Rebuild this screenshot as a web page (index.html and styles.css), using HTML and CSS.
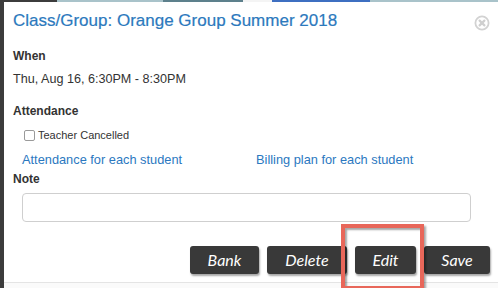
FILE: index.html
```html
<!DOCTYPE html>
<html lang="en">
<head>
  <meta charset="UTF-8">
  <meta name="viewport" content="width=device-width, initial-scale=1.0">
  <title>Class/Group details</title>
  <link rel="stylesheet" href="styles.css">
</head>
<body>

<div class="backdrop-strip">
  <span class="seg seg-dark"></span>
  <span class="seg seg-light"></span>
  <span class="seg seg-teal"></span>
  <span class="seg seg-white"></span>
  <span class="seg seg-blue"></span>
  <span class="seg seg-light2"></span>
</div>

<div class="modal">
  <div class="modal-header">
    <h1>Class/Group: Orange Group Summer 2018</h1>
    <button class="close" aria-label="Close">
      <svg width="16" height="16" viewBox="0 0 16 16">
        <circle cx="8" cy="8" r="6.6" fill="none" stroke="#d2d2d2" stroke-width="1.8"/>
        <path d="M5.6 5.6 L10.4 10.4 M10.4 5.6 L5.6 10.4" stroke="#cfcfcf" stroke-width="2.2" stroke-linecap="round"/>
      </svg>
    </button>
  </div>

  <div class="modal-body">
    <div class="label label-when">When</div>
    <div class="value">Thu, Aug 16, 6:30PM - 8:30PM</div>

    <div class="label label-attendance">Attendance</div>
    <label class="check-row">
      <input type="checkbox" class="check">
      <span>Teacher Cancelled</span>
    </label>
    <div class="link-row">
      <a href="#" class="link-attendance">Attendance for each student</a>
      <a href="#">Billing plan for each student</a>
    </div>

    <div class="label">Note</div>
    <input type="text" class="note-input">

    <div class="actions">
      <button class="btn btn-bank">Bank</button>
      <button class="btn btn-delete">Delete</button>
      <button class="btn btn-edit">Edit</button>
      <button class="btn btn-save">Save</button>
    </div>
  </div>

  <!-- screenshot annotation around the Edit button -->
  <div class="highlight"></div>
</div>

<div class="page-below"></div>

</body>
</html>
```

FILE: styles.css
```css
* {
  box-sizing: border-box;
}

body {
  margin: 0;
  padding: 0;
  height: 288px;
  overflow: hidden;
  font-family: 'Liberation Sans', Arial, sans-serif;
  background-color: #3c3c3c;
  color: #333;
}

.backdrop-strip {
  display: flex;
  height: 2px;
}

.seg { display: block; height: 2px; }
.seg-dark { width: 57px; background: #3c3c3c; }
.seg-light { width: 106px; background: #a9c3ca; }
.seg-teal { width: 80px; background: #5d808c; }
.seg-white { width: 29px; background: #f4f4f4; }
.seg-blue { width: 98px; background: #3e6fc1; }
.seg-light2 { flex: 1; background: #a9c3ca; }

.modal {
  position: relative;
  margin-left: 4px;
  height: 281px;
  background-color: #fff;
  border-bottom: 1px solid #e4e4e4;
}

.modal-header {
  display: flex;
  justify-content: space-between;
  align-items: flex-start;
  padding: 9px 8px 0 9px;
}

h1 {
  margin: 0;
  font-size: 17px;
  line-height: 20px;
  font-weight: normal;
  color: #2c79bd;
  -webkit-text-stroke: 0.2px #2c79bd;
}

.close {
  border: none;
  background: none;
  padding: 0;
  margin-top: 4px;
  width: 16px;
  height: 16px;
  cursor: pointer;
}

.close svg {
  display: block;
}

.modal-body {
  padding: 0 0 0 9px;
}

.label {
  font-size: 12px;
  line-height: 16px;
  font-weight: bold;
  color: #333;
}

.label-when {
  margin-top: 17px;
}

.value {
  margin-top: 7px;
  font-size: 12.6px;
  line-height: 16px;
}

.label-attendance {
  margin-top: 16px;
}

.check-row {
  display: flex;
  align-items: center;
  gap: 3px;
  margin: 8px 0 0 11px;
  font-size: 11px;
  line-height: 16px;
}

.check {
  appearance: none;
  margin: 0;
  width: 11px;
  height: 11px;
  border: 1px solid #9a9a9a;
  border-radius: 2px;
  background: #fff;
}

.link-row {
  display: flex;
  margin: 9px 0 0 9px;
  font-size: 12.8px;
  line-height: 16px;
}

.link-row a {
  color: #2b78bf;
  text-decoration: none;
}

.link-attendance {
  width: 234px;
}

.link-row + .label {
  margin-top: 3px;
}

.note-input {
  display: block;
  margin: 6px 0 0 9px;
  width: 449px;
  height: 29px;
  border: 1px solid #cfcfcf;
  border-radius: 4px;
}

.actions {
  display: flex;
  justify-content: flex-end;
  gap: 8px;
  margin-top: 24px;
  padding-right: 8px;
}

.btn {
  height: 28px;
  border: none;
  border-radius: 3px;
  background-color: #393939;
  color: #fff;
  font-family: Lato, 'Open Sans', sans-serif;
  font-style: italic;
  font-size: 16px;
  padding: 0 0 2px;
  box-shadow: 1px 2px 2px rgba(0, 0, 0, 0.35);
  cursor: pointer;
}

.btn-bank { width: 69px; }
.btn-delete { width: 80px; }
.btn-edit { width: 61px; }
.btn-save { width: 66px; }

.highlight {
  position: absolute;
  left: 337px;
  top: 222px;
  width: 83px;
  height: 66px;
  border: 4px solid #e8675a;
  box-shadow: 2px 2px 2px rgba(0, 0, 0, 0.35), inset 2px 2px 2px rgba(0, 0, 0, 0.35);
}

.page-below {
  height: 5px;
  margin-left: 4px;
  background-color: #fafafa;
}
```
